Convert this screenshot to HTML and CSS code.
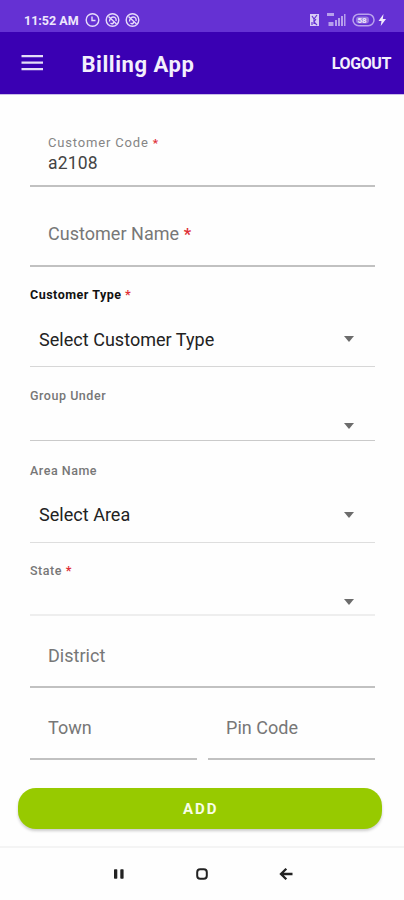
FILE: index.html
```html
<!DOCTYPE html>
<html lang="en">
<head>
<meta charset="utf-8">
<title>Billing App</title>
<link rel="stylesheet" href="styles.css">
</head>
<body>
<header>
  <div class="status">
    <span class="time">11:52 AM</span>
    <svg class="status-icons" width="56" height="16" viewBox="0 0 56 16" fill="none" stroke="#e6dcfa" stroke-width="1.4">
      <circle cx="7.500" cy="8" r="6.300"/><path d="M7 4.500v4h3.500"/>
      <circle cx="27.500" cy="8" r="6.300"/><path d="M23.500 4.500l8 7.500M24.500 9.500c0-3 2-4.500 4-4.500s3 2 2.500 4M25.500 11c2 1.500 3 .5 3-1"/>
      <circle cx="47.500" cy="8" r="6.300"/><path d="M43.500 4.500l8 7.500M44.500 9.500c0-3 2-4.500 4-4.500s3 2 2.500 4M45.500 11c2 1.500 3 .5 3-1"/>
    </svg>
    <svg class="signals" width="80" height="16" viewBox="0 0 80 16" fill="none">
      <path fill="#d8cbf5" d="M1 2h9v12H1z"/>
      <path stroke="#6531d3" stroke-width="1.200" d="M3 4l2 3v5M5 7l3-4M7 7l-2 3 3 3M3 10v3"/>
      <path fill="#b7a0ec" d="M18 1h7v3h-7zM19.500 10h5v4h-5zM26 8h2v6h-2zM29 6h2v8h-2zM32 4h2v10h-2zM35 2h1.500v12H35z"/>
      <rect x="44" y="2.200" width="21" height="11.500" rx="5.700" stroke="#b9a2ec" stroke-width="1.500"/>
      <rect x="47" y="4.500" width="13" height="7" rx="3" fill="#9878e1"/>
      <text class="battery" x="48.500" y="11" fill="#f1eafc">58</text>
      <path fill="#f1eafc" d="M74.500 2l-5 7h3l-.8 5 5.300-7h-3.200z"/>
    </svg>
  </div>
  <div class="appbar">
    <svg class="menu" width="22" height="18" viewBox="0 0 22 18" fill="#e4dcf8"><path d="M.5 1H22v2.300H.5zM.5 7.500H22v2.300H.5zM.5 14H22v2.300H.5z"/></svg>
    <h1>Billing App</h1>
    <span class="logout">LOGOUT</span>
  </div>
</header>
<main>
  <div class="field code"><span class="small">Customer Code <b>*</b></span><span class="value">a2108</span></div>
  <div class="field name"><span class="hint">Customer Name <b>*</b></span></div>
  <div class="select type"><span class="label strong">Customer Type <b>*</b></span><div class="choice"><span>Select Customer Type</span><i class="arrow"></i></div></div>
  <div class="select group"><span class="label">Group Under</span><div class="choice"><i class="arrow"></i></div></div>
  <div class="select area"><span class="label">Area Name</span><div class="choice"><span>Select Area</span><i class="arrow"></i></div></div>
  <div class="select state"><span class="label">State <b>*</b></span><div class="choice"><i class="arrow"></i></div></div>
  <div class="field district"><span class="hint">District</span></div>
  <div class="pair">
    <div class="field town"><span class="hint">Town</span></div>
    <div class="field pin"><span class="hint">Pin Code</span></div>
  </div>
</main>
<button>ADD</button>
<nav>
  <svg width="12" height="12" viewBox="0 0 12 12" fill="#222"><rect x="1" y="1.200" width="3.300" height="9.600" rx=".7"/><rect x="7.300" y="1.200" width="3.300" height="9.600" rx=".7"/></svg>
  <svg width="12" height="12" viewBox="0 0 12 12" fill="none" stroke="#222" stroke-width="2"><rect x="1.200" y="1.200" width="9.600" height="9.600" rx="3"/></svg>
  <svg width="14" height="12" viewBox="0 0 14 12" fill="none" stroke="#222" stroke-width="2.300"><path d="M7.300 .8L2 6l5.300 5.200M2 6h11.500"/></svg>
</nav>
</body>
</html>
```
FILE: styles.css
```css
* { box-sizing: border-box; }
body { margin: 0; width: 404px; height: 900px; overflow: hidden; background: #fefefe; font-family: Roboto, sans-serif; display: flex; flex-direction: column; }
svg { display: block; flex: none; }
.status { height: 32px; background: #6531d3; display: flex; align-items: center; padding: 8px 15px 0 24px; color: #eee7fc; }
.time { font-size: 12.5px; font-weight: 700; width: 61px; white-space: nowrap; }
.signals { margin-left: auto; }
.battery { font-size: 8px; font-weight: 700; }
.appbar { height: 62px; background: #3a00b3; display: flex; align-items: center; padding: 0 13px 0 21px; color: #f3effc; }
header { border-bottom: 1px solid #c9bde8; height: 95px; flex: none; }
h1 { margin: 3px 0 0 38.5px; font-size: 22px; font-weight: 700; line-height: 28px; letter-spacing: .55px; }
.logout { margin: 1px 0 0 auto; font-size: 16px; font-weight: 700; letter-spacing: -.4px; }
main { height: 665px; flex: none; padding: 0 29px 0 30px; }
b { color: #df3038; font-weight: 700; }
.field { display: flex; flex-direction: column; justify-content: flex-end; padding-left: 18px; border-bottom: 2px solid #c1c1c1; color: #777; white-space: nowrap; }
.code { height: 92px; padding-bottom: 10px; }
.small { font-size: 13px; line-height: 18px; letter-spacing: .83px; color: #858585; }
.value { font-size: 17.5px; line-height: 23px; letter-spacing: .2px; color: #444; }
.hint { font-size: 18px; line-height: 22px; letter-spacing: .03px; }
.name { height: 80px; padding-bottom: 19px; }
.name b, .small b { font-size: .9em; }
.select { display: flex; flex-direction: column; border-bottom: 1px solid #d7d7d7; }
.label { font-size: 12.500px; font-weight: 500; line-height: 16px; letter-spacing: .53px; color: #777; }
.strong { color: #111; font-weight: 700; letter-spacing: .5px; }
.choice { display: flex; align-items: center; flex: 1; padding: 0 21px 0 9px; font-size: 18px; letter-spacing: .03px; color: #222; }
.arrow { margin-left: auto; border: 5px solid transparent; border-top: 6px solid #6c6c6c; border-bottom: 0; }
.type { height: 100px; padding-top: 20px; }
.type .choice { padding-top: 9px; }
.group { height: 74px; padding-top: 21px; border-color: #cacaca; }
.group .choice { padding-top: 8px; }
.area { height: 102px; padding-top: 22px; border-color: #dedede; }
.area .choice { padding-top: 8px; }
.state { height: 73px; padding-top: 20px; border-bottom: 2px solid #eee; }
.state .choice { padding-top: 10px; }
.district { height: 72px; padding-bottom: 19px; }
.pair { display: grid; grid-template-columns: 167px 167px; gap: 11px; }
.town, .pin { height: 72px; padding-bottom: 19px; }
button { flex: none; margin: 28px 22px 0 17.5px; height: 41px; border: 0; padding: 1px 0 0 2px; border-radius: 18px; background: #97ca00; color: #f8fde8; font: 700 15px Roboto, sans-serif; letter-spacing: 2px; box-shadow: 0 2px 3px #0003; }
nav { margin-top: 17px; height: 54px; border-top: 2px solid #f4f4f4; display: flex; align-items: center; justify-content: center; gap: 71px; padding-left: 1px; }
```
